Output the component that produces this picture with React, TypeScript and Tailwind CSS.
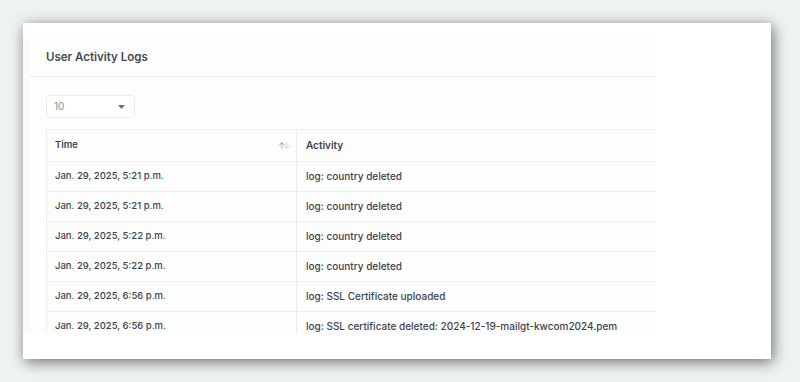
import React from 'react'

const rows = [
    { time: 'Jan. 29, 2025, 5:21 p.m.', activity: 'log: country deleted' },
    { time: 'Jan. 29, 2025, 5:21 p.m.', activity: 'log: country deleted' },
    { time: 'Jan. 29, 2025, 5:22 p.m.', activity: 'log: country deleted' },
    { time: 'Jan. 29, 2025, 5:22 p.m.', activity: 'log: country deleted' },
    { time: 'Jan. 29, 2025, 6:56 p.m.', activity: 'log: SSL Certificate uploaded' },
    { time: 'Jan. 29, 2025, 6:56 p.m.', activity: 'log: SSL certificate deleted: 2024-12-19-mailgt-kwcom2024.pem' },
]

const App = () => {
    return (
        <div className="w-[800px] h-[382px] bg-[#eff3f2] pt-[23px] pl-[23px] font-['Inter',sans-serif] overflow-hidden">

            {/* Screenshot card */}
            <div className="w-[748px] h-[336px] bg-white shadow-[2px_3px_14px_rgba(0,0,0,0.55)]">

                <div className="w-[632px] h-[311px] overflow-hidden bg-[#fdfdfd] flex flex-col">

                    <div className="h-[16px] shrink-0 bg-white" />

                    <div className="flex flex-1 min-h-0">
                        <div className="w-[7px] shrink-0 bg-[#fafafa]" />

                        <div className="flex-1 min-w-0 flex flex-col min-h-0">
                            {/* Title */}
                            <div className="h-[38px] shrink-0 flex items-center pl-[16px] border-b border-[#ececec]">
                                <h2 className="text-[11.5px] font-semibold text-[#454b55]">
                                    User Activity Logs
                                </h2>
                            </div>

                            <div className="pl-[16px] pt-[18px]">
                                {/* Page size select */}
                                <div className="w-[89px] h-[23px] border border-[#ececec] rounded-[3px] flex items-center justify-between px-[7px] bg-white">
                                    <span className="text-[10px] text-[#8a909a]">10</span>
                                    <svg width="7" height="4" viewBox="0 0 7 4" className="mr-[2px]">
                                        <path d="M0 0 L7 0 L3.5 4 Z" fill="#6b7280" />
                                    </svg>
                                </div>

                                {/* Table */}
                                <table className="mt-[11px] w-[700px] border-collapse text-[9.5px] text-[#3d434d]">
                                    <thead>
                                        <tr className="h-[32px]">
                                            <th className="w-[250px] border border-[#ececec] text-left font-semibold pl-[8px] pr-[5px]">
                                                <div className="flex items-center justify-between">
                                                    <span>Time</span>
                                                    <span className="text-[9px] font-normal tracking-[-2.5px] pr-[3px]">
                                                        <span className="text-[#9ca3af]">↑</span>
                                                        <span className="text-[#d1d5db]">↓</span>
                                                    </span>
                                                </div>
                                            </th>
                                            <th className="border border-[#ececec] text-left font-semibold pl-[9px] text-[10px]">Activity</th>
                                        </tr>
                                    </thead>
                                    <tbody>
                                        {rows.map((r, i) => (
                                            <tr key={i} className="h-[30px]">
                                                <td className="border border-[#ececec] pl-[8px] font-medium">{r.time}</td>
                                                <td className="border border-[#ececec] pl-[9px] font-medium text-[10px]">{r.activity}</td>
                                            </tr>
                                        ))}
                                    </tbody>
                                </table>
                            </div>
                        </div>
                    </div>

                </div>

            </div>

        </div>
    )
}

export default App
